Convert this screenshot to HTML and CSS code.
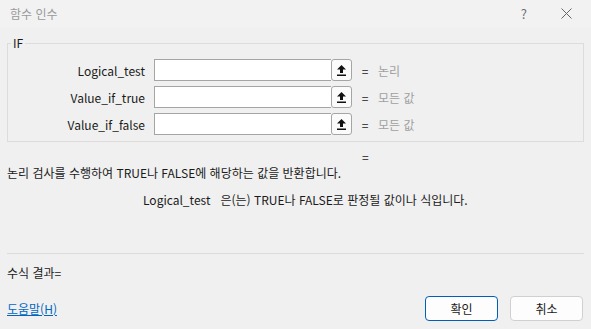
FILE: index.html
```html
<!DOCTYPE html>
<html lang="ko">
<head>
    <meta charset="UTF-8">
    <title>함수 인수</title>
    <link rel="stylesheet" href="styles.css">
</head>
<body>
    <div class="dialog">
        <div class="titlebar">
            <span class="title">함수 인수</span>
            <span class="help">?</span>
            <svg class="close" width="11" height="11" viewBox="0 0 11 11">
                <path d="M0.5 0.5 L10.5 10.5 M10.5 0.5 L0.5 10.5" stroke="#666" stroke-width="1" fill="none"/>
            </svg>
        </div>

        <fieldset class="args">
            <legend>IF</legend>
            <div class="arg-row">
                <label>Logical_test</label>
                <div class="field"><span class="field-input"></span><span class="pick"><svg width="9" height="11" viewBox="0 0 9 11"><path d="M4.5 0 L9 4.5 L6 4.5 L6 8 L3 8 L3 4.5 L0 4.5 Z" fill="#111"/><rect x="0" y="9.5" width="9" height="1.5" fill="#111"/></svg></span></div>
                <span class="eq">=</span>
                <span class="result">논리</span>
            </div>
            <div class="arg-row">
                <label>Value_if_true</label>
                <div class="field"><span class="field-input"></span><span class="pick"><svg width="9" height="11" viewBox="0 0 9 11"><path d="M4.5 0 L9 4.5 L6 4.5 L6 8 L3 8 L3 4.5 L0 4.5 Z" fill="#111"/><rect x="0" y="9.5" width="9" height="1.5" fill="#111"/></svg></span></div>
                <span class="eq">=</span>
                <span class="result">모든 값</span>
            </div>
            <div class="arg-row">
                <label>Value_if_false</label>
                <div class="field"><span class="field-input"></span><span class="pick"><svg width="9" height="11" viewBox="0 0 9 11"><path d="M4.5 0 L9 4.5 L6 4.5 L6 8 L3 8 L3 4.5 L0 4.5 Z" fill="#111"/><rect x="0" y="9.5" width="9" height="1.5" fill="#111"/></svg></span></div>
                <span class="eq">=</span>
                <span class="result">모든 값</span>
            </div>
        </fieldset>

        <div class="func-result">=</div>
        <div class="desc">논리 검사를 수행하여 TRUE나 FALSE에 해당하는 값을 반환합니다.</div>
        <div class="arg-desc"><span class="arg-name">Logical_test</span>은(는) TRUE나 FALSE로 판정될 값이나 식입니다.</div>

        <div class="separator"></div>
        <div class="formula">수식 결과=</div>

        <div class="footer">
            <a href="#" class="help-link">도움말(H)</a>
            <div class="buttons">
                <button type="button" class="btn btn-default">확인</button>
                <button type="button" class="btn">취소</button>
            </div>
        </div>
    </div>
</body>
</html>
```

FILE: styles.css
```css
body {
    margin: 0;
    padding: 0;
    background-color: #f0f0f0;
    font-family: "Noto Sans CJK KR", "Noto Sans", sans-serif;
    font-size: 12px;
    color: #1a1a1a;
}

.dialog {
    width: 591px;
    height: 329px;
    background-color: #f0f0f0;
    box-sizing: border-box;
    overflow: hidden;
}

.titlebar {
    height: 27px;
    display: flex;
    align-items: center;
    background-color: #f2f2f2;
}

.title {
    flex: 1;
    padding-left: 10px;
    color: #9a9a9a;
    font-size: 12px;
}

.help {
    color: #707070;
    font-size: 13px;
    margin-right: 34px;
}

.close {
    margin-right: 19px;
}

.args {
    margin: 8px 7px 0;
    padding: 8px 0 6px;
    border: 1px solid #dcdcdc;
    min-width: 0;
}

.args legend {
    margin-left: 3px;
    padding: 0 2px;
    line-height: 16px;
    color: #1a1a1a;
}

.arg-row {
    display: grid;
    grid-template-columns: 137px 198px 8px auto;
    column-gap: 9px;
    align-items: center;
    height: 22px;
    margin-bottom: 5px;
}

.arg-row:last-child {
    margin-bottom: 0;
}

.arg-row label {
    text-align: right;
}

.field {
    display: flex;
    height: 22px;
    box-sizing: border-box;
}

.field-input {
    flex: 1;
    background: white;
    border: 1px solid #a5a5a5;
    border-right: none;
}

.pick {
    width: 21px;
    box-sizing: border-box;
    display: flex;
    align-items: center;
    justify-content: center;
    background: #fbfbfb;
    border: 1px solid #a5a5a5;
    border-radius: 3px;
}

.eq {
    text-align: center;
}

.result {
    color: #a0a0a0;
    padding-left: 0;
}

.func-result {
    margin-top: 7px;
    line-height: 16px;
    padding-left: 362px;
}

.desc {
    line-height: 16px;
    padding-left: 7px;
}

.arg-desc {
    margin-top: 11px;
    line-height: 16px;
    padding-left: 143px;
}

.arg-name {
    margin-right: 10px;
}

.separator {
    margin: 45px 7px 0;
    height: 1px;
    background-color: #dcdcdc;
}

.formula {
    margin-top: 11px;
    line-height: 16px;
    padding-left: 7px;
}

.footer {
    margin-top: 15px;
    display: flex;
    align-items: center;
    justify-content: space-between;
    padding: 0 8px 0 7px;
}

.help-link {
    color: #0067c0;
    text-decoration: underline;
}

.buttons {
    display: flex;
    gap: 12px;
}

.btn {
    width: 73px;
    height: 25px;
    font-family: "Noto Sans CJK KR", "Noto Sans", sans-serif;
    font-size: 12px;
    color: #1a1a1a;
    background-color: #fdfdfd;
    border: 1px solid #d0d0d0;
    border-radius: 4px;
    padding: 0;
}

.btn-default {
    border-color: #005fb8;
}
```
